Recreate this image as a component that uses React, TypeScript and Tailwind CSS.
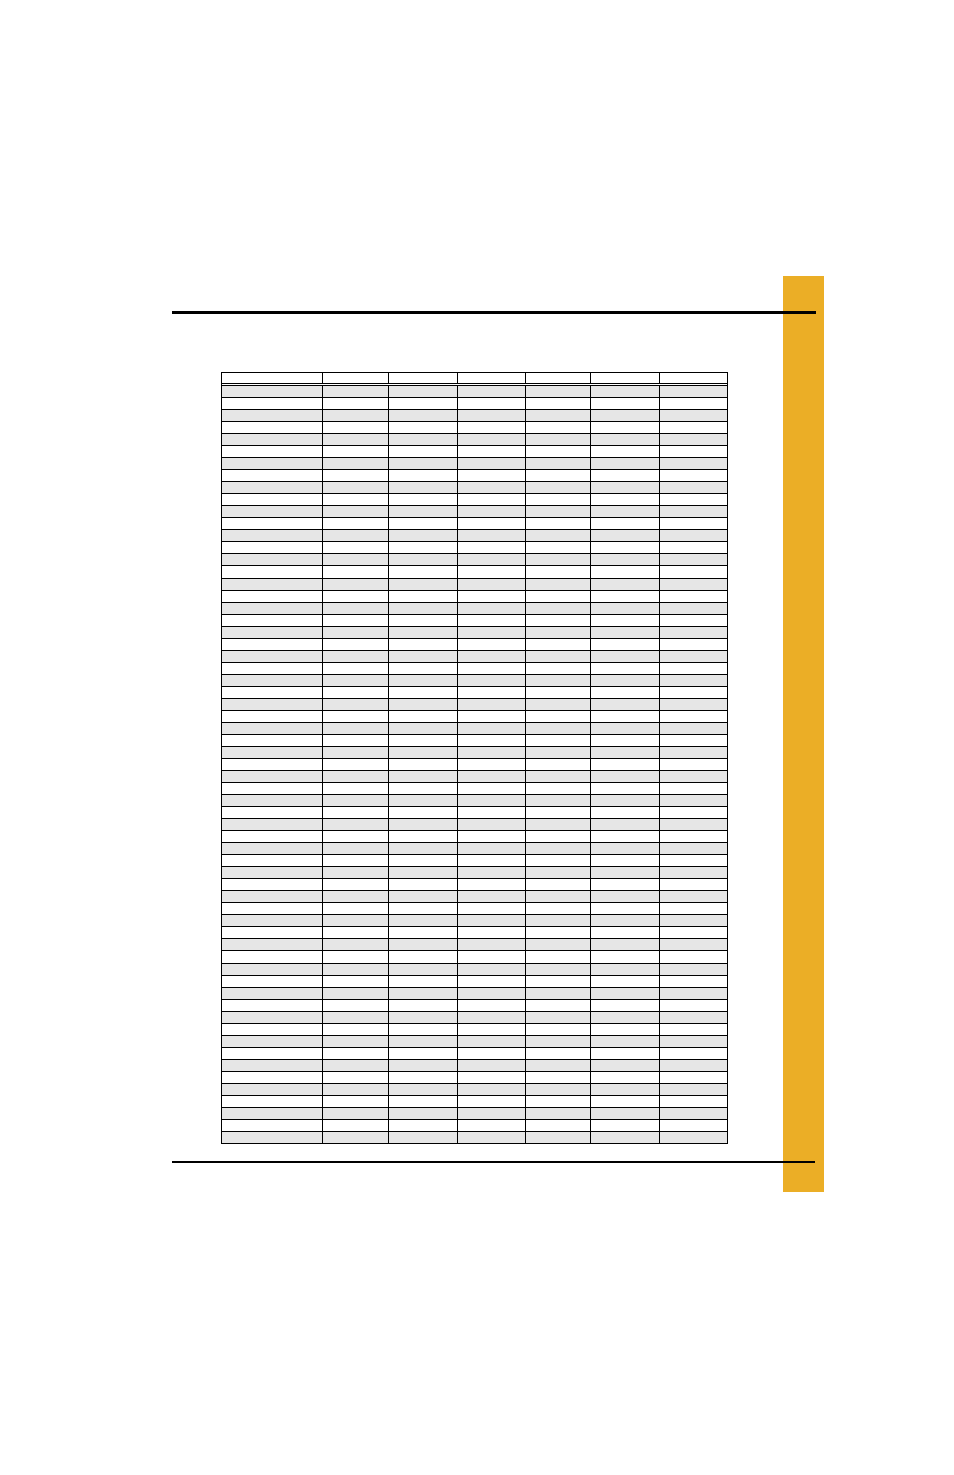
const colWidths = ['w-[100px]', 'w-[66px]', 'w-[69px]', 'w-[68px]', 'w-[65px]', 'w-[69px]', 'w-[68px]'];
const rowCount = 63;

function Row({ shaded }: { shaded: boolean }) {
    return (
        <div className={`flex border-b border-black ${shaded ? 'bg-[#e6e6e6]' : 'bg-white'}`}>
            {colWidths.map((w, i) => (
                <div key={i} className={`${w} shrink-0 h-full ${i > 0 ? 'border-l border-black' : ''}`} />
            ))}
        </div>
    );
}

export default function App() {
    const rows = Array.from({ length: rowCount }, (_, i) => i);

    return (
        <div className="relative w-[954px] h-[1475px] bg-white overflow-hidden">
            {/* side tab */}
            <div className="absolute left-[783px] top-[276px] w-[41px] h-[916px] bg-[#ebae26]" />

            <div className="relative z-10 pt-[311px] pl-[172px]">
                <div className="w-[644px] h-[3px] bg-black" />

                {/* table */}
                <div className="mt-[58px] ml-[49px] w-[507px] border-l border-r border-t border-black box-border">
                    <div className="flex h-[13px] border-b-[3px] border-double border-black bg-white">
                        {colWidths.map((w, i) => (
                            <div key={i} className={`${w} shrink-0 ${i > 0 ? 'border-l border-black' : ''}`} />
                        ))}
                    </div>
                    <div className="grid h-[758px] grid-rows-[repeat(63,minmax(0,1fr))]">
                        {rows.map(i => (
                            <Row key={i} shaded={i % 2 === 0} />
                        ))}
                    </div>
                </div>

                <div className="mt-[17px] w-[643px] h-[2px] bg-black" />
            </div>
        </div>
    );
}
